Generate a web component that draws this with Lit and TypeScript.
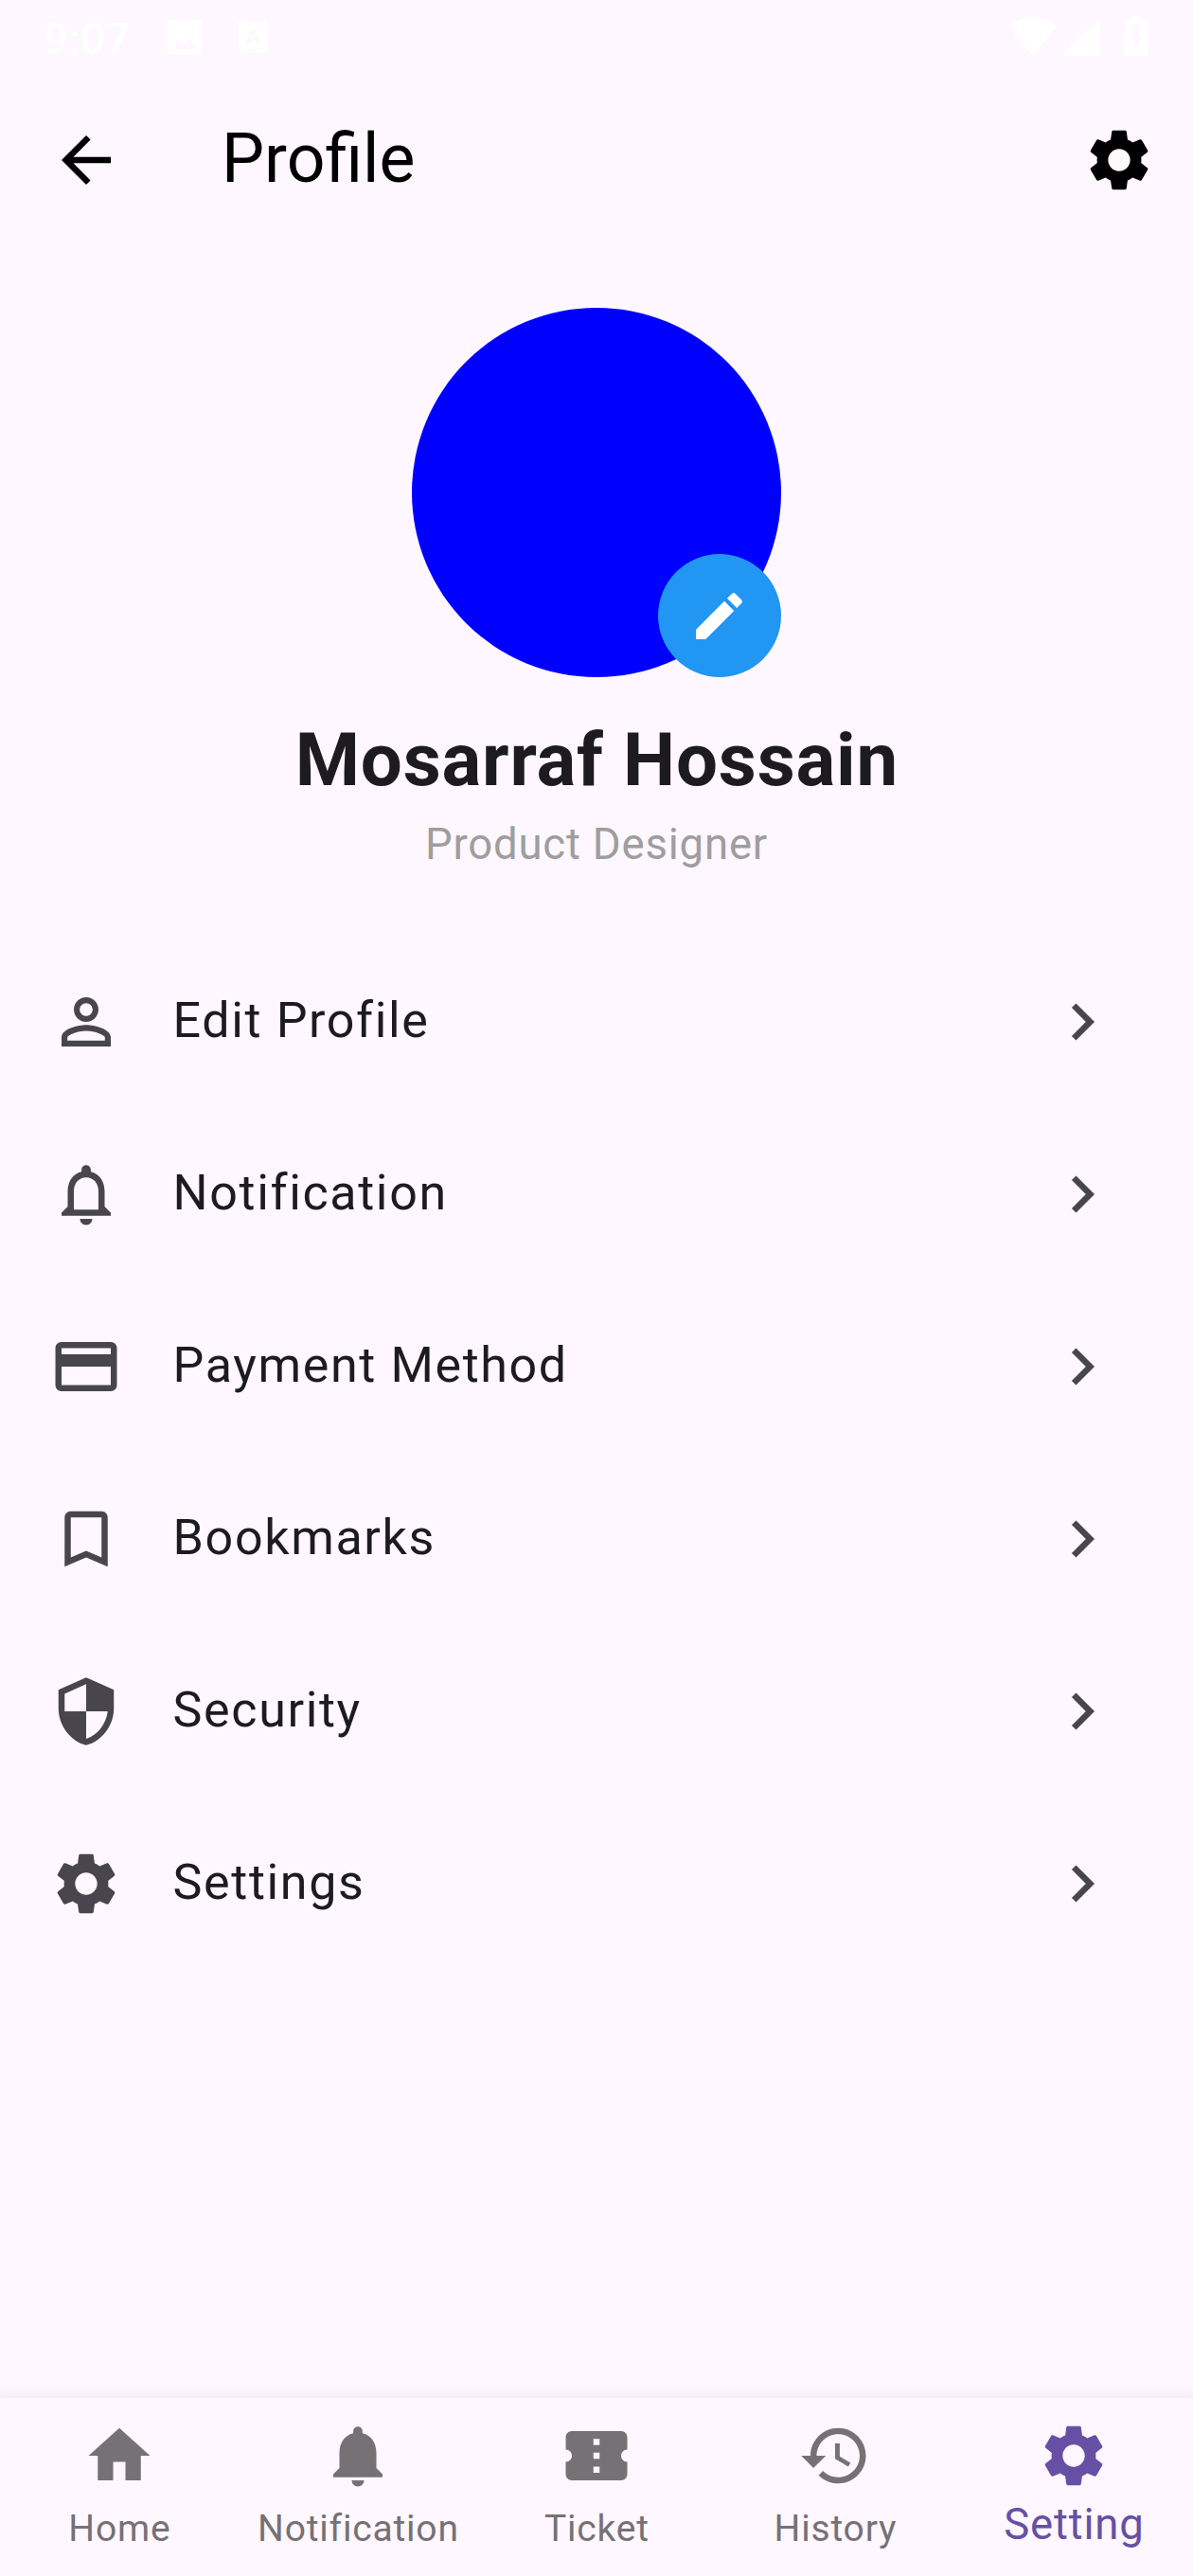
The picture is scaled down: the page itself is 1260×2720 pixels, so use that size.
import { LitElement, html, css, svg } from "lit";
import { customElement, property } from "lit/decorators.js";

const GEAR =
  "M19.14 12.94c.04-.3.06-.61.06-.94 0-.32-.02-.64-.07-.94l2.03-1.58c.18-.14.23-.41.12-.61l-1.92-3.32c-.12-.22-.37-.29-.59-.22l-2.39.96c-.5-.38-1.03-.7-1.62-.94l-.36-2.54c-.04-.24-.24-.41-.48-.41h-3.84c-.24 0-.43.17-.47.41l-.36 2.54c-.59.24-1.13.57-1.62.94l-2.39-.96c-.22-.08-.47 0-.59.22L2.74 8.87c-.12.21-.08.47.12.61l2.03 1.58c-.05.3-.09.63-.09.94s.02.64.07.94l-2.03 1.58c-.18.14-.23.41-.12.61l1.92 3.32c.12.22.37.29.59.22l2.39-.96c.5.38 1.03.7 1.62.94l.36 2.54c.05.24.24.41.48.41h3.84c.24 0 .44-.17.47-.41l.36-2.54c.59-.24 1.13-.56 1.62-.94l2.39.96c.22.08.47 0 .59-.22l1.92-3.32c.12-.22.07-.47-.12-.61l-2.01-1.58zM12 15.6c-1.98 0-3.6-1.62-3.6-3.6s1.62-3.6 3.6-3.6 3.6 1.62 3.6 3.6-1.62 3.6-3.6 3.6z";

const ICONS: Record<string, string> = {
  gear: GEAR,
  back: "M20 11H7.83l5.59-5.59L12 4l-8 8 8 8 1.41-1.41L7.83 13H20v-2z",
  edit: "M3 17.25V21h3.75L17.81 9.94l-3.75-3.75L3 17.25zM20.71 7.04c.39-.39.39-1.02 0-1.41l-2.34-2.34c-.39-.39-1.02-.39-1.41 0l-1.83 1.83 3.75 3.75 1.83-1.83z",
  person:
    "M12 5.9c1.16 0 2.1.94 2.1 2.1s-.94 2.1-2.1 2.1S9.9 9.16 9.9 8s.94-2.1 2.1-2.1m0 9c2.97 0 6.1 1.46 6.1 2.1v1.1H5.9V17c0-.64 3.13-2.1 6.1-2.1M12 4C9.79 4 8 5.79 8 8s1.79 4 4 4 4-1.79 4-4-1.79-4-4-4zm0 9c-2.67 0-8 1.34-8 4v3h16v-3c0-2.66-5.33-4-8-4z",
  bellOutline:
    "M12 22c1.1 0 2-.9 2-2h-4c0 1.1.9 2 2 2zm6-6v-5c0-3.07-1.63-5.64-4.5-6.32V4c0-.83-.67-1.5-1.5-1.5s-1.5.67-1.5 1.5v.68C7.64 5.36 6 7.92 6 11v5l-2 2v1h16v-1l-2-2zm-2 1H8v-6c0-2.48 1.51-4.5 4-4.5s4 2.02 4 4.5v6z",
  card: "M20 4H4c-1.11 0-1.99.89-1.99 2L2 18c0 1.11.89 2 2 2h16c1.11 0 2-.89 2-2V6c0-1.11-.89-2-2-2zm0 14H4v-6h16v6zm0-10H4V6h16v2z",
  bookmark: "M17 3H7c-1.1 0-1.99.9-1.99 2L5 21l7-3 7 3V5c0-1.1-.9-2-2-2zm0 15l-5-2.18L7 18V5h10v13z",
  shield:
    "M12 1L3 5v6c0 5.55 3.84 10.74 9 12 5.16-1.26 9-6.45 9-12V5l-9-4zm0 10.99h7c-.53 4.12-3.28 7.79-7 8.94V12H5V6.3l7-3.11v8.8z",
  chevron: "M10 6L8.59 7.41 13.17 12l-4.58 4.59L10 18l6-6z",
  home: "M10 20v-6h4v6h5v-8h3L12 3 2 12h3v8z",
  bell: "M12 22c1.1 0 2-.9 2-2h-4c0 1.1.89 2 2 2zm6-6v-5c0-3.07-1.64-5.64-4.5-6.32V4c0-.83-.67-1.5-1.5-1.5s-1.5.67-1.5 1.5v.68C7.63 5.36 6 7.92 6 11v5l-2 2v1h16v-1l-2-2z",
  ticket:
    "M22 10V6c0-1.11-.9-2-2-2H4c-1.1 0-1.99.89-1.99 2v4c1.1 0 1.99.9 1.99 2s-.89 2-2 2v4c0 1.1.9 2 2 2h16c1.1 0 2-.9 2-2v-4c-1.1 0-2-.9-2-2s.9-2 2-2zm-9 7.5h-2v-2h2v2zm0-4.5h-2v-2h2v2zm0-4.5h-2v-2h2v2z",
  history:
    "M13 3c-4.97 0-9 4.03-9 9H1l3.89 3.89.07.14L9 12H6c0-3.87 3.13-7 7-7s7 3.13 7 7-3.13 7-7 7c-1.93 0-3.68-.79-4.94-2.06l-1.42 1.42C8.27 19.99 10.51 21 13 21c4.97 0 9-4.03 9-9s-4.03-9-9-9zm-1 5v5l4.28 2.54.72-1.21-3.5-2.08V8H12z",
};

@customElement("md-icon")
class MdIcon extends LitElement {
  @property() name = "";

  static styles = css`
    :host {
      display: block;
      flex: none;
      width: 78px;
      height: 78px;
    }
    svg {
      display: block;
      width: 100%;
      height: 100%;
      fill: currentColor;
    }
  `;

  render() {
    return html`<svg viewBox="0 0 24 24">${svg`<path fill-rule="evenodd" d=${ICONS[this.name] ?? ""} />`}</svg>`;
  }
}

@customElement("status-bar")
class StatusBar extends LitElement {
  static styles = css`
    :host {
      display: flex;
      justify-content: space-between;
      height: 78px;
      color: #fff;
    }
    .side {
      display: flex;
    }
    .time {
      width: 128px;
      padding-left: 46px;
      font-size: 46.5px;
      font-weight: 500;
      line-height: 82px;
      box-sizing: content-box;
    }
    svg {
      display: block;
      height: 78px;
      fill: #fff;
    }
    .cut {
      fill: #fef7ff;
    }
    .letter {
      fill: #fef7ff;
      font: 700 24px Roboto, sans-serif;
    }
  `;

  render() {
    return html`
      <div class="side">
        <div class="time">9:07</div>
        <svg width="120" height="78" viewBox="174 0 120 78">
          <rect x="177" y="21" width="36.5" height="36.5" rx="4" />
          <path class="cut" d="M182 51.500l7-9.500 5 6 6-8 9 11.500z" />
          <rect x="252" y="22" width="30.5" height="33.5" rx="4" />
          <text class="letter" x="259" y="47">A</text>
          <path class="cut" d="M268 50.5h3v3h-3zM273 50.5h3v3h-3zM278 50.5h2v3h-2z" />
        </svg>
      </div>
      <svg width="200" height="78" viewBox="1060 0 200 78">
        <path d="M1067 26q24-15.500 47 0q2.500 1.500 0.500 4L1092.500 56.500q-2 2-4 0L1066.500 30q-2-2.500 0.500-4z" />
        <path d="M1162 21v38h-36q-4-1-1-4l33-33q2-2 4-1z" />
        <path
          fill-rule="evenodd"
          d="M1195 17h10v4h4q3 0 3 3v32q0 3-3 3h-18q-3 0-3-3v-32q0-3 3-3h4zM1196.500 28L1195 41H1198.500L1196 54L1206.500 38H1202L1205 28z"
        />
      </svg>
    `;
  }
}

interface Entry {
  icon: string;
  label: string;
}

const MENU: Entry[] = [
  { icon: "person", label: "Edit Profile" },
  { icon: "bellOutline", label: "Notification" },
  { icon: "card", label: "Payment Method" },
  { icon: "bookmark", label: "Bookmarks" },
  { icon: "shield", label: "Security" },
  { icon: "gear", label: "Settings" },
];

const TABS: Entry[] = [
  { icon: "home", label: "Home" },
  { icon: "bell", label: "Notification" },
  { icon: "ticket", label: "Ticket" },
  { icon: "history", label: "History" },
  { icon: "gear", label: "Setting" },
];

@customElement("app-root")
class AppRoot extends LitElement {
  static styles = css`
    :host {
      display: flex;
      flex-direction: column;
      width: 1260px;
      height: 2720px;
      overflow: hidden;
      background: #fef7ff;
      color: #1d1b20;
      font-family: Roboto, sans-serif;
    }
    .appbar {
      display: flex;
      align-items: center;
      height: 182px;
      padding: 0 39px 0 52px;
      color: #000;
    }
    .title {
      flex: 1;
      margin: 0;
      padding: 0 0 3px 104px;
      font-size: 71.5px;
      font-weight: 400;
      line-height: 91px;
    }
    .profile {
      display: flex;
      flex-direction: column;
      align-items: center;
      padding-top: 65px;
    }
    .avatar {
      position: relative;
      width: 390px;
      height: 390px;
      border-radius: 50%;
      background: #00f;
    }
    .badge {
      position: absolute;
      right: 0;
      bottom: 0;
      display: flex;
      align-items: center;
      justify-content: center;
      width: 130px;
      height: 130px;
      border-radius: 50%;
      background: #2196f3;
      color: #fff;
    }
    .badge md-icon {
      width: 65px;
      height: 65px;
      margin-right: 1px;
    }
    .name {
      margin: 32px 0 0;
      padding-left: 0.8px;
      font-size: 78px;
      font-weight: 700;
      line-height: 111px;
      letter-spacing: 0.8125px;
    }
    .role {
      padding-top: 1px;
      color: #9e9e9e;
      font-size: 45.5px;
      line-height: 65px;
      letter-spacing: 0.8125px;
    }
    .menu {
      flex: 1;
      padding-top: 64px;
    }
    .row {
      display: flex;
      align-items: center;
      height: 182px;
      padding: 0 78px 0 52px;
      color: #49454f;
    }
    .row .label {
      flex: 1;
      padding: 0 0 3px 52.6px;
      color: #1d1b20;
      font-size: 52px;
      line-height: 78px;
      letter-spacing: 1.625px;
    }
    .tabs {
      display: grid;
      grid-template-columns: repeat(5, 1fr);
      height: 188px;
      background: #fef7ff;
      box-shadow: 0 5px 13px 8px rgba(0, 0, 0, 0.055);
    }
    .tab {
      display: flex;
      flex-direction: column;
      align-items: center;
      gap: 15px;
      padding-top: 22px;
      color: #757175;
      font-size: 39px;
      line-height: 46px;
      letter-spacing: 0.8125px;
    }
    .tab span {
      padding-left: 0.8px;
    }
    .tab.active {
      gap: 11px;
      color: #6750a4;
      font-size: 45.5px;
    }
  `;

  render() {
    return html`
      <status-bar></status-bar>
      <header class="appbar">
        <md-icon name="back"></md-icon>
        <h1 class="title">Profile</h1>
        <md-icon name="gear"></md-icon>
      </header>
      <section class="profile">
        <div class="avatar">
          <div class="badge"><md-icon name="edit"></md-icon></div>
        </div>
        <h2 class="name">Mosarraf Hossain</h2>
        <div class="role">Product Designer</div>
      </section>
      <main class="menu">
        ${MENU.map(
          (m) => html`
            <div class="row">
              <md-icon name=${m.icon}></md-icon>
              <span class="label">${m.label}</span>
              <md-icon name="chevron"></md-icon>
            </div>
          `,
        )}
      </main>
      <nav class="tabs">
        ${TABS.map(
          (t) => html`
            <div class=${t.label === "Setting" ? "tab active" : "tab"}>
              <md-icon name=${t.icon}></md-icon>
              <span>${t.label}</span>
            </div>
          `,
        )}
      </nav>
    `;
  }
}
